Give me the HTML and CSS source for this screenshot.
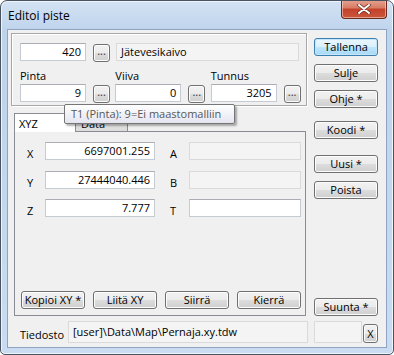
FILE: index.html
```html
<!DOCTYPE html>
<html lang="fi">
<head>
    <meta charset="UTF-8">
    <title>Editoi piste</title>
    <link rel="stylesheet" href="styles.css">
</head>
<body>
    <div class="window">
        <div class="titlebar">
            <span class="title">Editoi piste</span>
            <div class="close">
                <svg width="14" height="10" viewBox="0 0 14 10">
                    <path d="M2 1 L12 9 M12 1 L2 9" stroke="#6b2a1c" stroke-width="3.4" stroke-linecap="round"/>
                    <path d="M2 1 L12 9 M12 1 L2 9" stroke="#fff" stroke-width="2" stroke-linecap="round"/>
                </svg>
            </div>
        </div>
        <div class="client">
            <div class="main">
                <div class="left">
                    <div class="group">
                        <div class="row">
                            <div class="edit num">420</div>
                            <div class="btn dots">...</div>
                            <div class="edit disabled name">Jätevesikaivo</div>
                        </div>
                        <div class="cols">
                            <div class="col">
                                <div class="label">Pinta</div>
                                <div class="row">
                                    <div class="edit num">9</div>
                                    <div class="btn dots">...</div>
                                </div>
                            </div>
                            <div class="col">
                                <div class="label">Viiva</div>
                                <div class="row">
                                    <div class="edit num">0</div>
                                    <div class="btn dots">...</div>
                                </div>
                            </div>
                            <div class="col">
                                <div class="label">Tunnus</div>
                                <div class="row">
                                    <div class="edit num">3205</div>
                                    <div class="btn dots">...</div>
                                </div>
                            </div>
                        </div>
                    </div>

                    <div class="tabs">
                        <div class="tabstrip">
                            <div class="tab active">XYZ</div>
                            <div class="tab">Data</div>
                        </div>
                        <div class="tabpanel">
                            <div class="coords">
                                <div class="clabel">X</div>
                                <div class="edit num">6697001.255</div>
                                <div class="clabel">A</div>
                                <div class="edit disabled"></div>

                                <div class="clabel">Y</div>
                                <div class="edit num">27444040.446</div>
                                <div class="clabel">B</div>
                                <div class="edit disabled"></div>

                                <div class="clabel">Z</div>
                                <div class="edit num">7.777</div>
                                <div class="clabel">T</div>
                                <div class="edit"></div>
                            </div>
                            <div class="actions">
                                <div class="btn">Kopioi XY *</div>
                                <div class="btn">Liitä XY</div>
                                <div class="btn">Siirrä</div>
                                <div class="btn">Kierrä</div>
                            </div>
                        </div>
                    </div>

                    <div class="tooltip">T1 (Pinta): 9=Ei maastomalliin</div>
                </div>

                <div class="side">
                    <div class="btn default">Tallenna</div>
                    <div class="btn">Sulje</div>
                    <div class="btn">Ohje *</div>
                    <div class="btn koodi">Koodi *</div>
                    <div class="btn uusi">Uusi *</div>
                    <div class="btn">Poista</div>
                    <div class="btn suunta">Suunta *</div>
                </div>
            </div>

            <div class="footer">
                <span class="flabel">Tiedosto</span>
                <div class="edit disabled file">[user]\Data\Map\Pernaja.xy.tdw</div>
                <div class="edit disabled small"></div>
                <div class="btn xbtn">X</div>
            </div>
        </div>
    </div>
</body>
</html>
```

FILE: styles.css
```css
body {
    margin: 0;
    font-family: "Open Sans", "Noto Sans", sans-serif;
    font-size: 11px;
    color: #000;
}
.window {
    position: relative;
    width: 394px;
    height: 355px;
    box-sizing: border-box;
    border: 1px solid #4a5360;
    border-radius: 7px 7px 5px 5px;
    background: linear-gradient(#d3e2f3, #bed3ec 30px, #c3d7ee 200px, #c9dcf1);
    box-shadow: inset 0 0 0 1px #eef4fb;
    overflow: hidden;
}
.titlebar {
    height: 28px;
    display: flex;
    justify-content: space-between;
    align-items: flex-start;
    padding-left: 7px;
}
.title {
    font-size: 12px;
    margin-top: 6px;
    color: #000;
}
.close {
    width: 46px;
    height: 19px;
    margin-right: 6px;
    margin-top: -1px;
    box-sizing: border-box;
    border: 1px solid #6a2a1f;
    border-top: none;
    border-radius: 0 0 4px 4px;
    background: linear-gradient(#e6a495, #d77a62 45%, #c4402a 50%, #c9573b 100%);
    box-shadow: inset 0 0 0 1px rgba(255, 220, 210, 0.55);
    display: flex;
    justify-content: center;
    align-items: center;
}

.client {
    margin: 0 6px;
    height: 319px;
    box-sizing: border-box;
    border: 1px solid #8fa4c0;
    background: #f0f0f0;
    display: flex;
    flex-direction: column;
}
.main {
    display: flex;
    padding: 3px 0 0 3px;
    height: 286px;
    box-sizing: border-box;
}
.left {
    position: relative;
    width: 296px;
}

/* perus kontrollit */
.edit {
    height: 18px;
    box-sizing: border-box;
    border: 1px solid #c5cbd3;
    border-top-color: #abadb3;
    background: #fff;
    line-height: 16px;
    padding: 0 4px;
    white-space: nowrap;
    overflow: hidden;
}
.edit.num {
    width: 66px;
    text-align: right;
}
.edit.disabled {
    background: #f4f4f4;
    border-color: #dadada;
}
.btn {
    height: 18px;
    box-sizing: border-box;
    border: 1px solid #707070;
    border-radius: 3px;
    background: linear-gradient(#f2f2f2, #ebebeb 50%, #dddddd 50%, #cfcfcf);
    box-shadow: inset 0 0 0 1px #fcfcfc;
    text-align: center;
    line-height: 15px;
    white-space: nowrap;
}
.btn.default {
    border-color: #3c7fb1;
    background: linear-gradient(#eaf6fd, #d9f0fc 50%, #bee6fd 50%, #a7d9f5);
    box-shadow: inset 0 0 0 1px #c5e6f8;
}
.btn.dots {
    width: 17px;
    margin-top: 1px;
    line-height: 12px;
    color: #333;
}

/* ylaryhma */
.group {
    height: 73px;
    box-sizing: border-box;
    border: 1px solid #a8a8a8;
    box-shadow: inset 1px 1px 0 #fff, 1px 1px 0 #fff;
    padding: 9px 0 0 8px;
}
.row {
    display: flex;
    gap: 7px;
}
.edit.name {
    width: 183px;
    margin-left: -1px;
    padding-left: 4px;
}
.cols {
    display: flex;
}
.col {
    width: 96px;
}
.label {
    height: 22px;
    line-height: 16px;
    padding-top: 6px;
    box-sizing: border-box;
}

/* valilehdet */
.tabs {
    margin: 7px 1px 0 3px;
}
.tabstrip {
    display: flex;
    align-items: flex-end;
    height: 18px;
}
.tab {
    height: 15px;
    width: 52px;
    box-sizing: border-box;
    border: 1px solid #898c95;
    border-bottom: none;
    border-left: none;
    background: linear-gradient(#e8e8e8, #dcdcdc);
    padding-left: 5px;
    line-height: 14px;
}
.tab.active {
    height: 19px;
    width: 62px;
    border-left: 1px solid #898c95;
    background: #fff;
    margin-bottom: -1px;
    position: relative;
    padding-left: 4px;
    line-height: 20px;
}
.tabpanel {
    height: 185px;
    box-sizing: border-box;
    border: 1px solid #898c95;
    background: #f0f0f0;
    display: flex;
    flex-direction: column;
    padding: 10px 4px 6px 12px;
}
.coords {
    display: grid;
    grid-template-columns: 18px 110px 34px 112px;
    row-gap: 7.5px;
}
.coords .edit.num {
    width: 110px;
}
.clabel {
    line-height: 18px;
    padding-top: 3px;
}
.coords .clabel:nth-child(4n+3) {
    padding-left: 15px;
}
.actions {
    margin-top: auto;
    display: flex;
    gap: 8px;
    margin-left: -6px;
}
.actions .btn {
    width: 64px;
}

/* tooltip */
.tooltip {
    position: absolute;
    left: 53px;
    top: 71px;
    width: 171px;
    height: 20px;
    box-sizing: border-box;
    border: 1px solid #767676;
    border-radius: 2px;
    background: linear-gradient(#ffffff, #e4e5f0);
    box-shadow: 2px 2px 2px rgba(0, 0, 0, 0.3);
    color: #575757;
    font-size: 11px;
    line-height: 18px;
    padding-left: 6px;
    white-space: nowrap;
}

/* oikea sarake */
.side {
    margin-left: 7px;
    width: 64px;
    display: flex;
    flex-direction: column;
    padding-top: 5px;
}
.side .btn {
    margin-bottom: 8px;
}
.side .koodi {
    margin-top: 5px;
}
.side .uusi {
    margin-top: 8px;
}
.side .suunta {
    margin-top: auto;
    margin-bottom: 0;
}

/* alarivi */
.footer {
    display: flex;
    align-items: center;
    margin-top: 5px;
    height: 22px;
    padding-left: 12px;
}
.flabel {
    width: 48px;
    padding-top: 5px;
}
.edit.file {
    width: 240px;
    height: 22px;
    line-height: 20px;
}
.edit.small {
    width: 48px;
    height: 22px;
    margin-left: 6px;
}
.btn.xbtn {
    width: 15px;
    height: 19px;
    margin-left: 1px;
    margin-top: 2px;
    line-height: 17px;
}
```
